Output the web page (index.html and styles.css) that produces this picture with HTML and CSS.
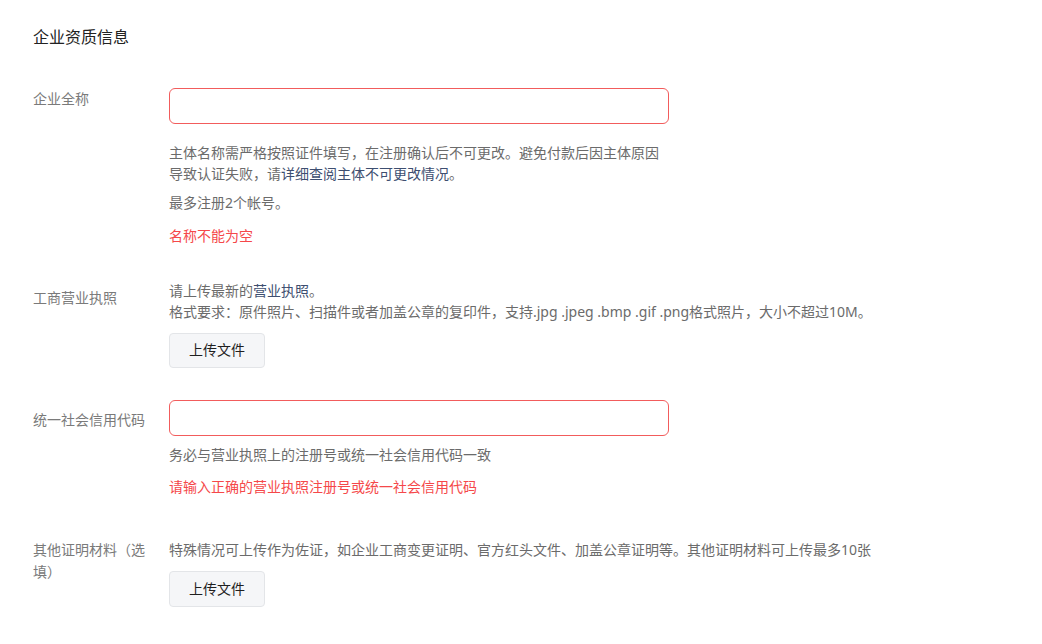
FILE: index.html
```html
<!DOCTYPE html>
<html lang="zh-CN">
<head>
<meta charset="utf-8">
<title>企业资质信息</title>
<link rel="stylesheet" href="styles.css">
</head>
<body>
<div class="page">
  <h2 class="title">企业资质信息</h2>

  <div class="item item-name">
    <div class="label label-name">企业全称</div>
    <div class="content">
      <input class="input is-error" type="text">
      <p class="help help-justify"><span class="line-justify">主体名称需严格按照证件填写，在注册确认后不可更改。避免付款后因主体原因</span>导致认证失败，请<a class="link" href="#">详细查阅主体不可更改情况</a>。</p>
      <p class="note">最多注册2个帐号。</p>
      <p class="error error-name">名称不能为空</p>
    </div>
  </div>

  <div class="item item-license">
    <div class="label label-license">工商营业执照</div>
    <div class="content">
      <p class="help help-license">请上传最新的<a class="link" href="#">营业执照</a>。<br>格式要求：原件照片、扫描件或者加盖公章的复印件，支持.jpg .jpeg .bmp .gif .png格式照片，大小不超过10M。</p>
      <button class="btn btn-license" type="button">上传文件</button>
    </div>
  </div>

  <div class="item item-code">
    <div class="label label-code">统一社会信用代码</div>
    <div class="content">
      <input class="input is-error" type="text">
      <p class="help help-code">务必与营业执照上的注册号或统一社会信用代码一致</p>
      <p class="error error-code">请输入正确的营业执照注册号或统一社会信用代码</p>
    </div>
  </div>

  <div class="item item-other">
    <div class="label label-other">其他证明材料（选填）</div>
    <div class="content">
      <p class="help help-other">特殊情况可上传作为佐证，如企业工商变更证明、官方红头文件、加盖公章证明等。其他证明材料可上传最多10张</p>
      <button class="btn btn-other" type="button">上传文件</button>
    </div>
  </div>
</div>
</body>
</html>
```

FILE: styles.css
```css
* { box-sizing: border-box; }

html, body {
  margin: 0;
  padding: 0;
  background: #ffffff;
}

body {
  font-family: "Noto Sans", "Noto Sans CJK SC", sans-serif;
  font-size: 14px;
  color: #666666;
}

.page {
  padding: 26px 0 0 33px;
}

.title {
  margin: 0;
  font-size: 16px;
  line-height: 22px;
  font-weight: normal;
  color: #222222;
}

.item {
  display: flex;
  align-items: flex-start;
}

.label {
  width: 120px;
  flex: none;
  margin-right: 16px;
  line-height: 22px;
  color: #7a7a7a;
}

.content {
  flex: 1;
  min-width: 0;
}

p { margin: 0; }

.input {
  display: block;
  width: 500px;
  height: 36px;
  border: 1px solid #f25c5c;
  border-radius: 6px;
  background: #fff;
  padding: 0 12px;
  font: inherit;
  outline: none;
}

.help {
  line-height: 21px;
  color: #6b6b6b;
}

.help-justify {
  margin-top: 18px;
}

.line-justify {
  display: block;
  width: 489px;
  white-space: nowrap;
  text-align: justify;
  text-align-last: justify;
}

.link {
  color: #3d4e70;
  text-decoration: none;
}

.note {
  margin-top: 8px;
  line-height: 22px;
  color: #6b6b6b;
}

.error {
  line-height: 22px;
  color: #f5484a;
}

.error-name { margin-top: 11px; }

.btn {
  display: block;
  width: 96px;
  height: 35px;
  border: 1px solid #e3e5e8;
  border-radius: 4px;
  background: #f5f6f8;
  color: #1f1f1f;
  font: inherit;
  font-size: 14px;
  padding: 0 0 3px;
  cursor: pointer;
}

/* row 1 */
.item-name { margin-top: 40px; }
.label-name { padding-top: 0; }

/* row 2 */
.item-license { margin-top: 33px; }
.label-license { padding-top: 7px; }
.btn-license { margin-top: 11px; }

/* row 3 */
.item-code { margin-top: 32px; }
.label-code { padding-top: 9px; }
.help-code { margin-top: 8px; }
.error-code { margin-top: 11px; }

/* row 4 */
.item-other { margin-top: 41px; }
.help-other { line-height: 22px; }
.btn-other { margin-top: 10px; height: 36px; }
```
